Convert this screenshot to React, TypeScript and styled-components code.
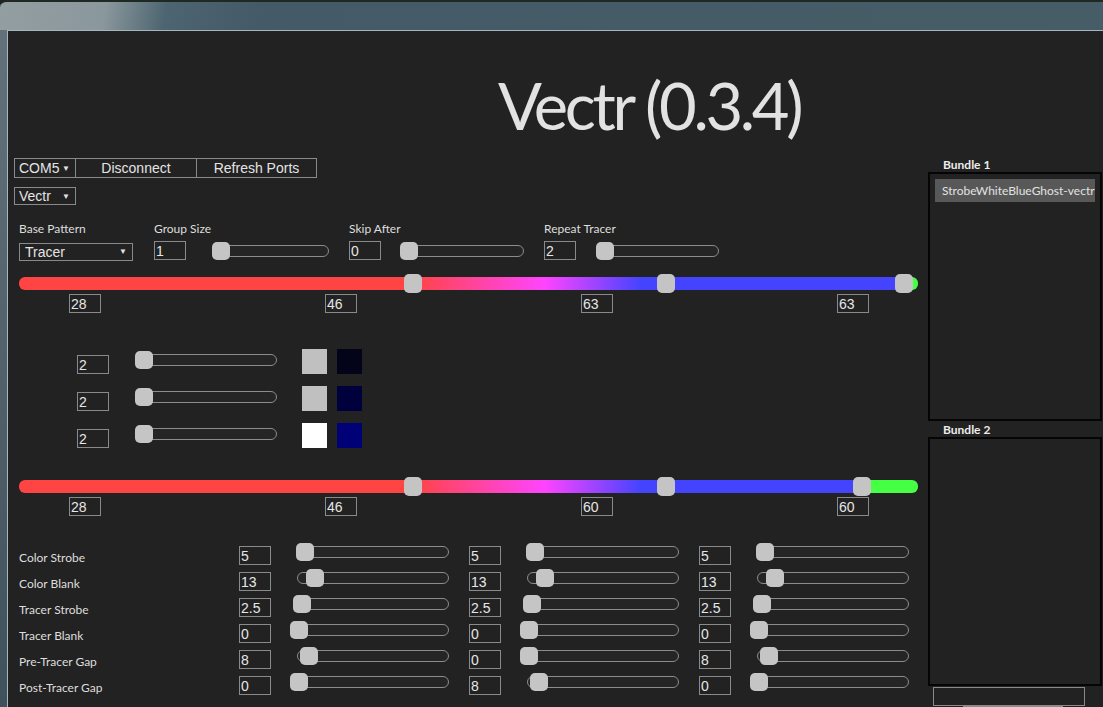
import React from 'react';
import styled, { createGlobalStyle } from 'styled-components';

const GlobalStyle = createGlobalStyle`
  html, body {
    margin: 0;
    padding: 0;
    overflow: hidden;
    background: #222222;
  }
  body {
    font-family: Lato, "Open Sans", sans-serif;
  }
  * {
    box-sizing: border-box;
  }
`;

const Window = styled.div`
  width: 1103px;
  height: 707px;
  overflow: hidden;
  padding: 28px 0 0 7px;
  border-top-left-radius: 7px;
  border-top: 2px solid #202824;
  background:
    linear-gradient(100deg, #939ea2 0px, #8a979c 105px, #4d6571 165px, #445a66 260px, #465c67 100%) top / 100% 28px no-repeat,
    linear-gradient(180deg, #64737b 0px, #3f515b 100%);
`;

const ClientArea = styled.div`
  height: 100%;
  background: #222222;
  border-top: 1px solid #a6b6be;
  border-left: 1px solid #a6b6be;
`;

const TitleRow = styled.div`
  height: 125px;
  padding: 42px 0 0 490px;
`;

const AppTitle = styled.h1`
  margin: 0;
  font-family: Lato, sans-serif;
  font-weight: 400;
  font-size: 65px;
  line-height: 65px;
  letter-spacing: -3.3px;
  color: #e2e2e2;
`;

const Main = styled.div`
  display: flex;
  align-items: flex-start;
`;

const LeftColumn = styled.div`
  width: 922px;
  padding: 2px 0 0 6px;
`;

/* ---------- toolbar ---------- */

const Toolbar = styled.div`
  display: flex;
  height: 20px;
`;

const DropButton = styled.div<{ $width: number }>`
  width: ${(p) => p.$width}px;
  height: 100%;
  display: flex;
  align-items: center;
  justify-content: space-between;
  padding: 0 5px 0 4px;
  border: 1px solid #8a8a8a;
  font-family: "Liberation Sans", Arial, sans-serif;
  font-size: 14px;
  color: #e4e4e4;

  &::after {
    content: '▼';
    font-size: 8px;
  }
`;

const ToolButton = styled.div<{ $width: number }>`
  width: ${(p) => p.$width}px;
  height: 100%;
  display: flex;
  align-items: center;
  justify-content: center;
  border: 1px solid #8a8a8a;
  border-left: none;
  font-family: "Liberation Sans", Arial, sans-serif;
  font-size: 14px;
  color: #e4e4e4;
`;

const ModeSelect = styled(DropButton)`
  height: 18px;
  margin-top: 9px;
`;

/* ---------- pattern parameters ---------- */

const ParamsGrid = styled.div`
  display: grid;
  grid-template-columns: 135px 195px 195px 200px;
  margin: 17px 0 0 5px;
`;

const ParamField = styled.div`
  display: flex;
  flex-direction: column;
`;

const FieldLabel = styled.div`
  font-size: 12px;
  line-height: 14px;
  color: #dedede;
  margin-bottom: 4px;
`;

const FieldControls = styled.div<{ $gap?: number }>`
  display: flex;
  align-items: center;
  gap: ${(p) => p.$gap ?? 26}px;
  height: 21px;
`;

const PatternSelect = styled(DropButton)`
  height: 18px;
  padding-left: 5px;
  margin-top: 2px;
`;

const NumBox = styled.input.attrs({ readOnly: true })`
  width: 32px;
  height: 19px;
  flex-shrink: 0;
  padding: 1px 1px 0;
  margin: 0;
  border: 1px solid #8a8a8a;
  border-radius: 0;
  background: transparent;
  outline: none;
  font-family: "Liberation Sans", Arial, sans-serif;
  font-size: 14px;
  line-height: 16px;
  color: #e6e6e6;
`;

/* ---------- slider ---------- */

const Track = styled.div<{ $width: number }>`
  position: relative;
  width: ${(p) => p.$width}px;
  height: 12px;
  flex-shrink: 0;
  border: 1px solid #8c8c8c;
  border-radius: 7px;
  background: #252525;
`;

const Thumb = styled.div`
  position: absolute;
  top: -4px;
  width: 18px;
  height: 18px;
  border-radius: 5px;
  background: #c5c5c5;
`;

const Slider: React.FC<{ width: number; offset?: number }> = ({ width, offset = 0 }) => (
  <Track $width={width}>
    <Thumb style={{ left: offset - 1 }} />
  </Track>
);

/* ---------- colour bars ---------- */

const Bar = styled.div`
  position: relative;
  width: 899px;
  height: 13px;
  margin-left: 5px;
  border-radius: 6px;
`;

const BarThumb = styled.div`
  position: absolute;
  top: -3px;
  width: 18px;
  height: 19px;
  margin-left: -9px;
  border-radius: 5px;
  background: #c4c4c4;
`;

const ColorBar: React.FC<{ stops: [number, number, number]; top: number }> = ({ stops, top }) => {
  const [a, b, c] = stops;
  const mid = a + (b - a) * 0.52;
  const background = `linear-gradient(90deg, #ff4444 0px, #ff4444 ${a}px, #ff44ff ${mid}px, #4444ff ${b - 25}px, #4444ff ${c}px, #44ff44 ${c}px, #44ff44 100%)`;
  return (
    <Bar style={{ background, marginTop: top }}>
      {stops.map((s) => (
        <BarThumb key={s} style={{ left: s }} />
      ))}
    </Bar>
  );
};

const NumberRow = styled.div`
  display: flex;
  gap: 224px;
  margin: 4px 0 0 55px;
`;

/* ---------- colour slots ---------- */

const ColorRows = styled.div`
  display: flex;
  flex-direction: column;
  gap: 12px;
  margin: 36px 0 0 63px;
`;

const ColorRow = styled.div`
  display: flex;
  align-items: flex-end;
  height: 25px;
`;

const RowSlider = styled.div`
  align-self: flex-start;
  margin: 5px 25px 0 26px;
`;

const Swatch = styled.div<{ $color: string }>`
  width: 25px;
  height: 25px;
  margin-right: 10px;
  background: ${(p) => p.$color};
`;

/* ---------- timings ---------- */

const TimingGrid = styled.div`
  display: flex;
  flex-direction: column;
  margin: 30px 0 0 5px;
`;

const TimingRow = styled.div`
  display: flex;
  align-items: flex-start;
  height: 26px;
`;

const TimingLabel = styled.div`
  width: 220px;
  padding-top: 5px;
  font-size: 12px;
  line-height: 14px;
  color: #dedede;
`;

const TimingGroup = styled.div`
  display: flex;
  align-items: flex-start;
  gap: 26px;
  width: 230px;
`;

/* ---------- bundles ---------- */

const RightPanel = styled.div`
  width: 180px;
  margin-left: -1px;
`;

const BundleLabel = styled.div`
  height: 16px;
  padding: 2px 0 0 15px;
  font-size: 12px;
  font-weight: 700;
  line-height: 13px;
  color: #ececec;
`;

const BundleBox = styled.div`
  width: 174px;
  height: 249px;
  padding: 5px;
  border: 2px solid #050505;
`;

const BundleItem = styled.div`
  width: 160px;
  height: 23px;
  padding-left: 7px;
  display: flex;
  align-items: center;
  background: #585858;
  font-size: 12px;
  color: #e2e2e2;
  white-space: nowrap;
`;

const BundleInput = styled.div`
  width: 152px;
  height: 19px;
  margin: 1px 0 0 5px;
  border: 1px solid #8a8a8a;
`;

const BundleButton = styled.div`
  width: 100px;
  height: 20px;
  margin: 0 0 0 35px;
  background: #8a8a8a;
`;

const timings = [
  { label: 'Color Strobe', values: [5, 5, 5] },
  { label: 'Color Blank', values: [13, 13, 13] },
  { label: 'Tracer Strobe', values: [2.5, 2.5, 2.5] },
  { label: 'Tracer Blank', values: [0, 0, 0] },
  { label: 'Pre-Tracer Gap', values: [8, 0, 8] },
  { label: 'Post-Tracer Gap', values: [0, 8, 0] },
];

const colorSlots = [
  { value: 2, colors: ['#c0c0c0', '#03031a'] },
  { value: 2, colors: ['#c0c0c0', '#00003c'] },
  { value: 2, colors: ['#ffffff', '#000077'] },
];

const thumbOffset = (v: number) => Math.round(-7 + v * 1.25);

export default function App() {
  return (
    <>
      <GlobalStyle />
      <Window>
        <ClientArea>
          <TitleRow>
            <AppTitle>Vectr (0.3.4)</AppTitle>
          </TitleRow>
          <Main>
            <LeftColumn>
              <Toolbar>
                <DropButton $width={62}>COM5</DropButton>
                <ToolButton $width={121}>Disconnect</ToolButton>
                <ToolButton $width={120}>Refresh Ports</ToolButton>
              </Toolbar>
              <ModeSelect $width={62}>Vectr</ModeSelect>

              <ParamsGrid>
                <ParamField>
                  <FieldLabel>Base Pattern</FieldLabel>
                  <FieldControls>
                    <PatternSelect $width={114}>Tracer</PatternSelect>
                  </FieldControls>
                </ParamField>
                <ParamField>
                  <FieldLabel>Group Size</FieldLabel>
                  <FieldControls $gap={26}>
                    <NumBox value="1" />
                    <Slider width={117} />
                  </FieldControls>
                </ParamField>
                <ParamField>
                  <FieldLabel>Skip After</FieldLabel>
                  <FieldControls $gap={19}>
                    <NumBox value="0" />
                    <Slider width={124} />
                  </FieldControls>
                </ParamField>
                <ParamField>
                  <FieldLabel>Repeat Tracer</FieldLabel>
                  <FieldControls $gap={20}>
                    <NumBox value="2" />
                    <Slider width={123} />
                  </FieldControls>
                </ParamField>
              </ParamsGrid>

              <ColorBar stops={[394, 647, 885]} top={16} />
              <NumberRow>
                {['28', '46', '63', '63'].map((v, i) => (
                  <NumBox key={i} value={v} />
                ))}
              </NumberRow>

              <ColorRows>
                {colorSlots.map((slot, i) => (
                  <ColorRow key={i}>
                    <NumBox value={String(slot.value)} />
                    <RowSlider>
                      <Slider width={142} />
                    </RowSlider>
                    {slot.colors.map((c) => (
                      <Swatch key={c} $color={c} />
                    ))}
                  </ColorRow>
                ))}
              </ColorRows>

              <ColorBar stops={[394, 647, 843]} top={32} />
              <NumberRow>
                {['28', '46', '60', '60'].map((v, i) => (
                  <NumBox key={i} value={v} />
                ))}
              </NumberRow>

              <TimingGrid>
                {timings.map((row) => (
                  <TimingRow key={row.label}>
                    <TimingLabel>{row.label}</TimingLabel>
                    {row.values.map((v, i) => (
                      <TimingGroup key={i}>
                        <NumBox value={String(v)} />
                        <Slider width={152} offset={thumbOffset(v)} />
                      </TimingGroup>
                    ))}
                  </TimingRow>
                ))}
              </TimingGrid>
            </LeftColumn>

            <RightPanel>
              <BundleLabel>Bundle 1</BundleLabel>
              <BundleBox>
                <BundleItem>StrobeWhiteBlueGhost-vectr</BundleItem>
              </BundleBox>
              <BundleLabel>Bundle 2</BundleLabel>
              <BundleBox />
              <BundleInput />
              <BundleButton />
            </RightPanel>
          </Main>
        </ClientArea>
      </Window>
    </>
  );
}
